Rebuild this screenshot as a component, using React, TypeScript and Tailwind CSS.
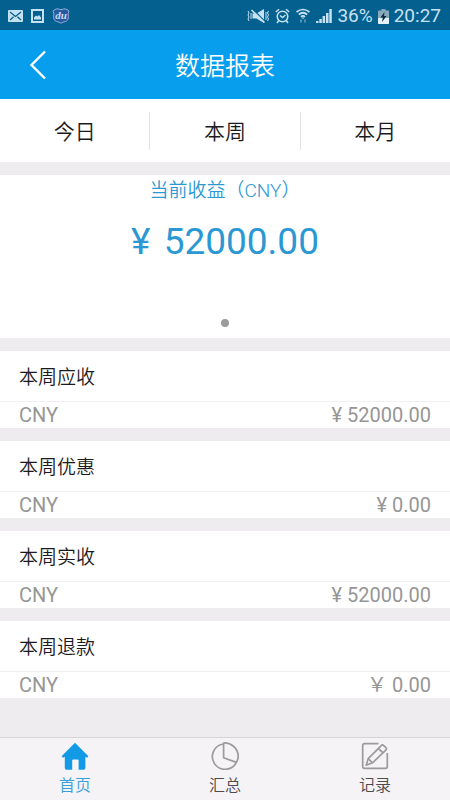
import { useState } from "react";

const tabs = ["今日", "本周", "本月"];

const reports = [
  { id: 1, title: "本周应收", currency: "CNY", amount: "¥ 52000.00" },
  { id: 2, title: "本周优惠", currency: "CNY", amount: "¥ 0.00" },
  { id: 3, title: "本周实收", currency: "CNY", amount: "¥ 52000.00" },
  { id: 4, title: "本周退款", currency: "CNY", amount: "￥ 0.00" },
];

const App = () => {
  const [activeNav, setActiveNav] = useState("home");

  return (
    <div className="min-h-screen flex flex-col bg-[#eeecef] font-[Roboto,'Noto_Sans_CJK_SC',sans-serif] text-[#1c1a1e]">
      <StatusBar />

      {/* Header */}
      <header className="grid grid-cols-[76px_1fr_76px] items-center h-[69px] bg-[#079eee] text-white">
        <button aria-label="返回" className="flex justify-center cursor-pointer">
          <svg width="18" height="30" viewBox="0 0 18 30" fill="none" stroke="currentColor" strokeWidth="2.4">
            <path d="M16 1.5 2.5 15 16 28.5" />
          </svg>
        </button>
        <h1 className="pt-1 text-center text-[25px] leading-8 font-[350]">数据报表</h1>
      </header>

      {/* Period tabs */}
      <div className="flex items-center h-[63px] bg-white divide-x divide-[#e4e2e5]">
        {tabs.map((tab) => (
          <button key={tab} className="flex-1 h-[38px] pt-0.5 text-[21px] leading-8 font-[350] cursor-pointer">
            {tab}
          </button>
        ))}
      </div>

      {/* Current income */}
      <section className="mt-[13px] flex flex-col items-center h-[163px] bg-white text-[#2b98d3]">
        <h2 className="pt-0.5 text-[19px] leading-7 font-[350]">当前收益（CNY）</h2>
        <p className="mt-[11px] text-[37px] leading-[52px]">
          <span className="mr-1">¥</span> 52000.00
        </p>
        <span className="mt-auto mb-[11px] w-2 h-2 rounded-full bg-[#9b9b9b]" />
      </section>

      {/* Report cards */}
      <main className="mt-[13px] flex flex-col gap-[13px]">
        {reports.map((report) => (
          <ReportCard
            key={report.id}
            title={report.title}
            currency={report.currency}
            amount={report.amount}
          />
        ))}
      </main>

      {/* Bottom navigation */}
      <nav className="mt-auto grid grid-cols-3 h-[63px] border-t border-[#d3d2d5] bg-[#f5f3f6]">
        <NavItem label="首页" active={activeNav === "home"} onClick={() => setActiveNav("home")}>
          <path
            d="M14 .8 27.4 14.2 26 15.8l-1.6-1V26a1.8 1.8 0 0 1-1.8 1.8h-5V18.4a1 1 0 0 0-1-1h-4.4a1 1 0 0 0-1 1v9.4H5.6A1.8 1.8 0 0 1 3.8 26V14.8l-1.8 1L.6 14.2Z"
            fill="currentColor"
            stroke="none"
          />
        </NavItem>
        <NavItem label="汇总" active={activeNav === "summary"} onClick={() => setActiveNav("summary")}>
          <path d="M12.6 2A12.7 12.7 0 1 0 25.4 20.4" />
          <path d="M12.6 1A13.7 13.7 0 0 1 27.2 13.5c.1 2.6-.5 4.9-1.8 6.9L12.6 15.8Z" />
        </NavItem>
        <NavItem label="记录" active={activeNav === "records"} onClick={() => setActiveNav("records")}>
          <path d="M17.5 1.7H3.4A1.7 1.7 0 0 0 1.7 3.4v21.2a1.7 1.7 0 0 0 1.7 1.7h21.2a1.7 1.7 0 0 0 1.7-1.7V11" />
          <path d="M20 3.8a2 2 0 0 1 2.8-.2l1.9 1.7a2 2 0 0 1 .1 2.8L11.5 20.8l-6.3 2.4 2-6.5Z" />
          <path d="m17.2 6.5 5 4.3M7.2 16.7l4.3 4.1" />
        </NavItem>
      </nav>
    </div>
  );
};

export default App;

// StatusBar Component
const StatusBar = () => {
  return (
    <div className="flex items-center justify-between h-[30px] pt-0.5 pl-2 pr-[9px] bg-[#04608f] text-[#c5e2f2]">
      <div className="flex items-center gap-2">
        <svg width="15" height="12" viewBox="0 0 15 12">
          <rect width="15" height="12" rx="1" fill="currentColor" />
          <path d="m2 2 5.5 4.5L13 2M2 10l3.6-3.2M13 10 9.4 6.8" fill="none" stroke="#04608f" strokeWidth="1.3" />
        </svg>
        <svg width="13" height="14" viewBox="0 0 13 14">
          <rect x="1" y="1" width="11" height="12" fill="none" stroke="currentColor" strokeWidth="2" />
          <path d="M3 10.5V8.5l2-2 1.5 1L8 6l2 2.5v2Z" fill="currentColor" />
        </svg>
        <svg width="18" height="16" viewBox="0 0 18 16">
          <path
            d="M3 1.5Q5 .3 7 1.2q2 .8 4 0Q13 .3 15 1.5l2 1.5-1 3q1.5 6-2.5 7.5-3 .5-4.5 1.7-1.5-1.2-4.5-1.7Q.5 12 2 6L1 3Z"
            fill="#2759a0"
            stroke="#8faedb"
          />
          <text x="9" y="11" textAnchor="middle" fontSize="11" fontStyle="italic" fontWeight="700" fontFamily="Liberation Serif, serif" fill="#c8dcf5">
            du
          </text>
        </svg>
      </div>

      <div className="flex items-center gap-[5px] text-[19px] leading-6">
        {/* vibrate / muted */}
        <svg width="23" height="16" viewBox="0 0 23 16" fill="none" stroke="currentColor">
          <path d="M5.5 5.5h4L17 1v14l-7.5-4.500h-4Z" fill="currentColor" stroke="none" />
          <path d="m6 1.5 12 12" stroke="#04608f" strokeWidth="1.5" />
          <path d="m4.5 2 13 12.5" strokeWidth="1.6" />
          <path d="m1 3 1 2-1 2 1 2-1 2 1 2M4 5v6M19 4v8M21.5 3l-1 2 1 2-1 2 1 2-1 2" />
        </svg>
        {/* alarm */}
        <svg width="15" height="16" viewBox="0 0 15 16" fill="none" stroke="currentColor" strokeWidth="1.5">
          <circle cx="7.5" cy="8.5" r="5.3" />
          <path d="M.8 4 4 1.2M14.2 4 11 1.2M3.8 12.5 2 15M11.2 12.5 13 15M5 7.5l2.5 2 3-2.5" />
        </svg>
        {/* wifi */}
        <svg width="16" height="16" viewBox="0 0 16 16" fill="none" stroke="currentColor" strokeWidth="1.7">
          <path d="M1.5 4Q8-1 14.5 4M3.8 6.5Q8 3 12.2 6.5M6 8.8Q8 7 10 8.8" />
          <path d="M8 11 6.5 9.5h3Z" fill="currentColor" stroke="none" />
          <path d="M6 11.5v3M10 11.5v3" stroke="#4f91b5" strokeWidth="2" />
        </svg>
        {/* signal */}
        <svg width="16" height="16" viewBox="0 0 16 16" fill="currentColor">
          <path d="M0 13h2.5v2H0ZM3.3 11h2.5v4H3.3ZM6.6 8h2.5v7H6.6ZM10 5h2.5v10H10ZM13.3 1h2.5v14h-2.5Z" />
        </svg>
        <span>36%</span>
        {/* battery */}
        <svg width="11" height="15" viewBox="0 0 11 15">
          <path d="M3.5 0h4v1.5H10q1 0 1 1V14q0 1-1 1H1q-1 0-1-1V2.5q0-1 1-1h2.5Z" fill="#86a9bc" />
          <path d="M0 9h11v5q0 1-1 1H1q-1 0-1-1Z" fill="#e3f2fa" />
          <path d="M6.5 3 2.5 8.5h2.3L4 13l4.5-6H6Z" fill="#10283a" />
        </svg>
        <span>20:27</span>
      </div>
    </div>
  );
};

// ReportCard Component
type ReportCardProps = {
  title: string;
  currency: string;
  amount: string;
};

const ReportCard = ({ title, currency, amount }: ReportCardProps) => {
  return (
    <section className="bg-white">
      <h3 className="px-[19px] pt-[13px] pb-[9px] text-[19px] leading-7 font-[350] border-b border-[#f1eff2]">
        {title}
      </h3>
      <div className="flex justify-between px-[19px] text-xl leading-[26px] text-[#969696]">
        <span>{currency}</span>
        <span>{amount}</span>
      </div>
    </section>
  );
};

// NavItem Component
type NavItemProps = {
  label: string;
  active: boolean;
  onClick: () => void;
  children: React.ReactNode;
};

const NavItem = ({ label, active, onClick, children }: NavItemProps) => {
  return (
    <button
      className={`flex flex-col items-center pt-1 cursor-pointer ${
        active ? "text-[#139ae6]" : "text-[#9b9a9c]"
      }`}
      onClick={onClick}
    >
      <svg width="28" height="28" viewBox="0 0 28 28" fill="none" stroke="currentColor" strokeWidth="1.7" strokeLinejoin="round">
        {children}
      </svg>
      <span className={`mt-1 text-base leading-6 font-[350] ${active ? "text-[#3a9fd8]" : "text-[#4c4b4d]"}`}>
        {label}
      </span>
    </button>
  );
};
